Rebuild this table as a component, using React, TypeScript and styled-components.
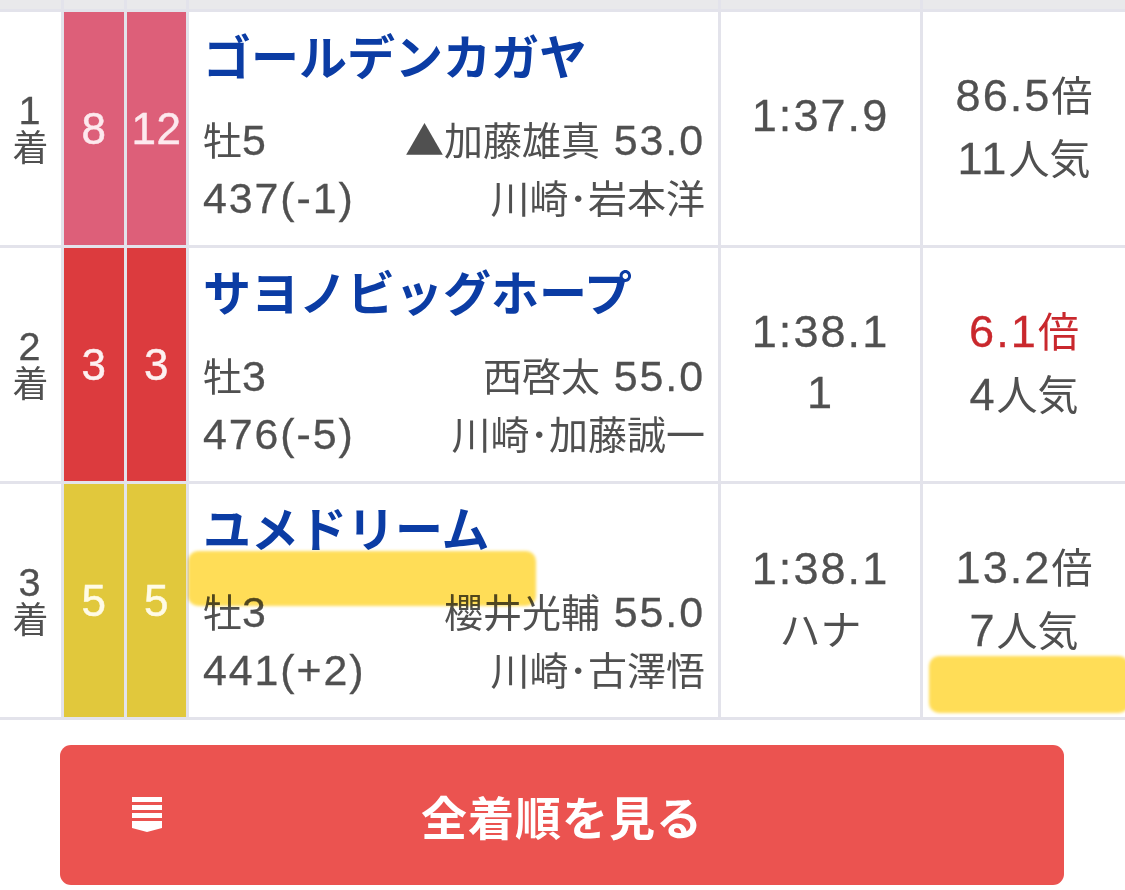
import React from "react";
import styled, { createGlobalStyle } from "styled-components";

const GlobalStyle = createGlobalStyle`
  html, body {
    margin: 0;
    padding: 0;
    background: #ffffff;
  }
  body {
    font-family: "Noto Sans CJK JP", "Noto Sans", sans-serif;
    -webkit-font-smoothing: antialiased;
  }
`;

const Page = styled.div`
  position: relative;
  width: 1125px;
  height: 890px;
  overflow: hidden;
  background: #ffffff;
`;

const Table = styled.div`
  display: grid;
  grid-template-columns: 61px 60px 59px 529px 199px 1fr;
  grid-template-rows: 9px repeat(3, 233px);
  gap: 3px;
  padding-bottom: 3px;
  background: #e3e3eb;
`;

const HeaderCell = styled.div`
  background: #e9e9eb;
`;

const Num = styled.span`
  font-family: "Liberation Sans", Arial, sans-serif;
  font-size: 1.1em;
  letter-spacing: 0.045em;
  -webkit-text-stroke: 0.3px currentColor;
`;

const RankCell = styled.div`
  background: #ffffff;
  display: flex;
  flex-direction: column;
  align-items: center;
  justify-content: center;
  padding-bottom: 4px;
  color: #505050;
  font-size: 36px;
`;

const RankPart = styled.span`
  display: block;
  line-height: 37px;
  height: 37px;
`;

const WakuCell = styled.div<{ $bg: string; $fg: string }>`
  background: ${(p) => p.$bg};
  color: ${(p) => p.$fg};
  display: flex;
  align-items: center;
  justify-content: center;
  font-family: "Liberation Sans", Arial, sans-serif;
  font-size: 44px;
  letter-spacing: 0.5px;
  -webkit-text-stroke: 0.5px currentColor;
`;

const InfoCell = styled.div`
  background: #ffffff;
  display: flex;
  flex-direction: column;
  padding: 12px 13px 19px 14px;
`;

const HorseName = styled.div`
  color: #0b3ca4;
  font-size: 48px;
  font-weight: 700;
  line-height: 60px;
  margin-bottom: 26px;
  white-space: nowrap;
`;

const InfoLine = styled.div`
  display: flex;
  justify-content: space-between;
  color: #505050;
  font-size: 39px;
  line-height: 56px;
  white-space: nowrap;
`;

const CenterCell = styled.div`
  background: #ffffff;
  display: flex;
  flex-direction: column;
  align-items: center;
  justify-content: center;
  padding-bottom: 6px;
  color: #505050;
  font-size: 41px;
  white-space: nowrap;
`;

const TimeLine = styled.div`
  line-height: 56px;
`;

const DiffLine = styled.div`
  line-height: 60px;
  min-height: 22px;
`;

const OddsLine = styled.div<{ $hot?: boolean }>`
  line-height: 61px;
  color: ${(p) => (p.$hot ? "#c9282d" : "#505050")};
`;

const Highlight = styled.div`
  position: absolute;
  background: rgba(255, 214, 50, 0.82);
  mix-blend-mode: multiply;
  border-radius: 10px;
  filter: blur(1.5px);
  pointer-events: none;
`;

const MoreButton = styled.button`
  display: grid;
  grid-template-columns: 1fr auto 1fr;
  align-items: center;
  box-sizing: border-box;
  width: 1004px;
  height: 140px;
  margin: 25px 0 0 60px;
  padding: 0 0 0 72px;
  border: none;
  border-radius: 11px;
  background: #eb5350;
  color: #ffffff;
  font-family: "Noto Sans CJK JP", "Noto Sans", sans-serif;
  font-size: 46px;
  font-weight: 700;
  letter-spacing: 1px;
  cursor: pointer;
`;

const IconWrap = styled.span`
  justify-self: start;
  display: flex;
`;

const ButtonLabel = styled.span`
  margin-left: -72px;
`;

type Row = {
  rank: string;
  waku: string;
  uma: string;
  bg: string;
  fg: string;
  name: string;
  sexAge: string;
  jockey: string;
  weight: string;
  trainer: string;
  time: string;
  diff: string;
  odds: string;
  hot?: boolean;
  pop: string;
};

const rows: Row[] = [
  {
    rank: "1",
    waku: "8",
    uma: "12",
    bg: "#dd5f79",
    fg: "#fde9ee",
    name: "ゴールデンカガヤ",
    sexAge: "牡5",
    jockey: "▲加藤雄真 53.0",
    weight: "437(-1)",
    trainer: "川崎･岩本洋",
    time: "1:37.9",
    diff: "",
    odds: "86.5倍",
    pop: "11人気",
  },
  {
    rank: "2",
    waku: "3",
    uma: "3",
    bg: "#dc3b3e",
    fg: "#fdf1f1",
    name: "サヨノビッグホープ",
    sexAge: "牡3",
    jockey: "西啓太 55.0",
    weight: "476(-5)",
    trainer: "川崎･加藤誠一",
    time: "1:38.1",
    diff: "1",
    odds: "6.1倍",
    hot: true,
    pop: "4人気",
  },
  {
    rank: "3",
    waku: "5",
    uma: "5",
    bg: "#e1c83c",
    fg: "#fffbe6",
    name: "ユメドリーム",
    sexAge: "牡3",
    jockey: "櫻井光輔 55.0",
    weight: "441(+2)",
    trainer: "川崎･古澤悟",
    time: "1:38.1",
    diff: "ハナ",
    odds: "13.2倍",
    pop: "7人気",
  },
];

const LATIN = /^[0-9:.()+\-\s]+$/;

const withNums = (text: string) =>
  text
    .split(/([0-9:.()+\-\s]+)/)
    .filter((part) => part.length > 0)
    .map((part, i) =>
      LATIN.test(part) ? (
        <Num key={i}>{part}</Num>
      ) : (
        <React.Fragment key={i}>{part}</React.Fragment>
      )
    );

const ListIcon = () => (
  <svg width="30" height="36" viewBox="0 0 30 36" fill="#ffffff">
    <rect x="0" y="0" width="30" height="5" />
    <rect x="0" y="8" width="30" height="5" />
    <rect x="0" y="16" width="30" height="5" />
    <polygon points="0,24 30,24 30,31 15,35 0,31" />
  </svg>
);

export default function App() {
  return (
    <Page>
      <GlobalStyle />
      <Table>
        {Array.from({ length: 6 }).map((_, i) => (
          <HeaderCell key={`h${i}`} />
        ))}
        {rows.map((r) => (
          <React.Fragment key={r.rank}>
            <RankCell>
              <RankPart>{withNums(r.rank)}</RankPart>
              <RankPart>着</RankPart>
            </RankCell>
            <WakuCell $bg={r.bg} $fg={r.fg}>
              {r.waku}
            </WakuCell>
            <WakuCell $bg={r.bg} $fg={r.fg}>
              {r.uma}
            </WakuCell>
            <InfoCell>
              <HorseName>{r.name}</HorseName>
              <InfoLine>
                <span>{withNums(r.sexAge)}</span>
                <span>{withNums(r.jockey)}</span>
              </InfoLine>
              <InfoLine>
                <span>{withNums(r.weight)}</span>
                <span>{r.trainer}</span>
              </InfoLine>
            </InfoCell>
            <CenterCell>
              <TimeLine>{withNums(r.time)}</TimeLine>
              <DiffLine>{withNums(r.diff)}</DiffLine>
            </CenterCell>
            <CenterCell>
              <OddsLine $hot={r.hot}>{withNums(r.odds)}</OddsLine>
              <OddsLine>{withNums(r.pop)}</OddsLine>
            </CenterCell>
          </React.Fragment>
        ))}
      </Table>
      <MoreButton>
        <IconWrap>
          <ListIcon />
        </IconWrap>
        <ButtonLabel>全着順を見る</ButtonLabel>
        <span />
      </MoreButton>
      <Highlight style={{ left: 188, top: 551, width: 348, height: 55 }} />
      <Highlight style={{ left: 929, top: 656, width: 200, height: 57 }} />
    </Page>
  );
}
